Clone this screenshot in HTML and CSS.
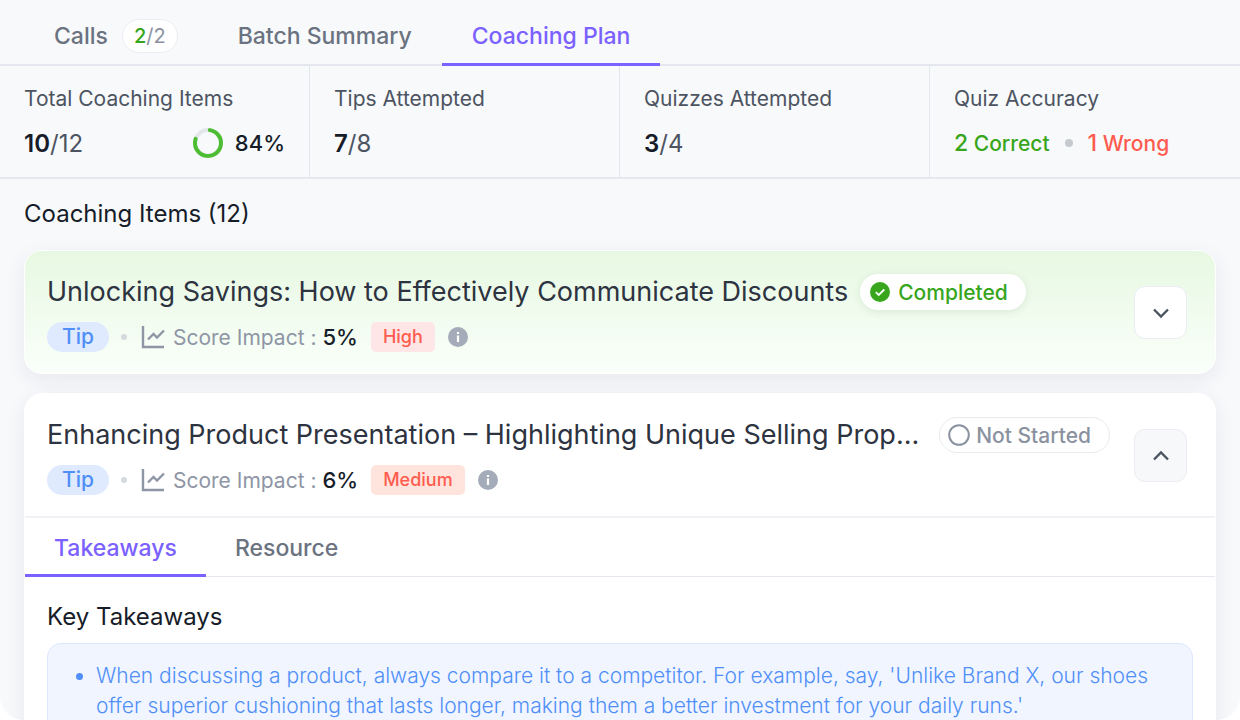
FILE: index.html
```html
<!DOCTYPE html>
<html lang="en">
<head>
    <meta charset="UTF-8">
    <meta name="viewport" content="width=device-width, initial-scale=1.0">
    <title>Coaching Plan</title>
    <link rel="stylesheet" href="styles.css">
</head>
<body>
<div class="panel">
    <nav class="tabs">
        <a href="#calls" class="tab">Calls <span class="count"><b>2</b>/2</span></a>
        <a href="#summary" class="tab">Batch Summary</a>
        <a href="#plan" class="tab active">Coaching Plan</a>
    </nav>

    <section class="stats">
        <div class="stat">
            <div class="stat-label">Total Coaching Items</div>
            <div class="stat-row">
                <div class="stat-value"><b>10</b>/12</div>
                <div class="progress">
                    <svg width="32" height="32" viewBox="0 0 32 32" fill="none" stroke-width="4">
                        <circle cx="16" cy="16" r="13" stroke="#e3e6ea"/>
                        <circle cx="16" cy="16" r="13" stroke="#4dbd33" stroke-linecap="round" pathLength="100" stroke-dasharray="78 22" transform="rotate(-82 16 16)"/>
                    </svg>
                    84%
                </div>
            </div>
        </div>
        <div class="stat">
            <div class="stat-label">Tips Attempted</div>
            <div class="stat-row"><div class="stat-value"><b>7</b>/8</div></div>
        </div>
        <div class="stat">
            <div class="stat-label">Quizzes Attempted</div>
            <div class="stat-row"><div class="stat-value"><b>3</b>/4</div></div>
        </div>
        <div class="stat">
            <div class="stat-label">Quiz Accuracy</div>
            <div class="stat-row accuracy">
                <span class="correct"><span class="num">2</span> Correct</span>
                <span class="dot big"></span>
                <span class="wrong"><span class="num">1</span> Wrong</span>
            </div>
        </div>
    </section>

    <main class="content">
        <h2>Coaching Items (12)</h2>

        <article class="card done">
            <header class="card-head">
                <div class="card-info">
                    <div class="title-row">
                        <h3>Unlocking Savings: How to Effectively Communicate Discounts</h3>
                        <span class="status completed">
                            <svg width="20" height="20" viewBox="0 0 20 20" fill="none">
                                <circle cx="10" cy="10" r="10" fill="#38a61c"/>
                                <path d="M5.8 10.2l2.9 2.7 5.6-5.4" stroke="#fff" stroke-width="1.8"/>
                            </svg>
                            Completed
                        </span>
                    </div>
                    <div class="meta">
                        <span class="type">Tip</span>
                        <span class="dot"></span>
                        <span class="impact">
                            <svg width="24" height="24" viewBox="0 0 24 24" fill="none" stroke="#8e95a5">
                                <path d="M2 1v21h21" stroke-width="2.4"/>
                                <path d="M7 14.5l5.5-5.5 3.5 3.5 7-7" stroke-width="2.4"/>
                            </svg>
                            Score Impact :
                        </span>
                        <span class="percent">5%</span>
                        <span class="level high">High</span>
                        <svg class="info" width="20" height="20" viewBox="0 0 20 20">
                            <circle cx="10" cy="10" r="10" fill="#a4abb9"/>
                            <path d="M8.9 5h2.2v2.1H8.9zM8.9 8.4h2.2V15H8.9z" fill="#fff"/>
                        </svg>
                    </div>
                </div>
                <button type="button" class="toggle" aria-label="Expand">
                    <svg width="20" height="20" viewBox="0 0 20 20" fill="none" stroke="#4d5461" stroke-width="2.4">
                        <path d="M3 6.5l7 7 7-7"/>
                    </svg>
                </button>
            </header>
        </article>

        <article class="card">
            <header class="card-head">
                <div class="card-info">
                    <div class="title-row">
                        <h3>Enhancing Product Presentation – Highlighting Unique Selling Prop...</h3>
                        <span class="status pending">
                            <svg width="22" height="22" viewBox="0 0 22 22" fill="none">
                                <circle cx="11" cy="11" r="9.8" stroke="#8b929f" stroke-width="2"/>
                            </svg>
                            Not Started
                        </span>
                    </div>
                    <div class="meta">
                        <span class="type">Tip</span>
                        <span class="dot"></span>
                        <span class="impact">
                            <svg width="24" height="24" viewBox="0 0 24 24" fill="none" stroke="#8e95a5">
                                <path d="M2 1v21h21" stroke-width="2.4"/>
                                <path d="M7 14.5l5.5-5.5 3.5 3.5 7-7" stroke-width="2.4"/>
                            </svg>
                            Score Impact :
                        </span>
                        <span class="percent">6%</span>
                        <span class="level medium">Medium</span>
                        <svg class="info" width="20" height="20" viewBox="0 0 20 20">
                            <circle cx="10" cy="10" r="10" fill="#a4abb9"/>
                            <path d="M8.9 5h2.2v2.1H8.9zM8.9 8.4h2.2V15H8.9z" fill="#fff"/>
                        </svg>
                    </div>
                </div>
                <button type="button" class="toggle open" aria-label="Collapse">
                    <svg width="20" height="20" viewBox="0 0 20 20" fill="none" stroke="#4d5461" stroke-width="2.4">
                        <path d="M3 13.5l7-7 7 7"/>
                    </svg>
                </button>
            </header>

            <nav class="tabs card-tabs">
                <a href="#takeaways" class="tab active">Takeaways</a>
                <a href="#resource" class="tab">Resource</a>
            </nav>

            <div class="card-body">
                <h4>Key Takeaways</h4>
                <ul class="takeaways">
                    <li>When discussing a product, always compare it to a competitor. For example, say, 'Unlike Brand X, our shoes offer superior cushioning that lasts longer, making them a better investment for your daily runs.'</li>
                </ul>
            </div>
        </article>
    </main>
</div>
</body>
</html>
```

FILE: styles.css
```css
* {
    box-sizing: border-box;
}

body {
    margin: 0;
    background: #fff;
    font-family: Inter, "Liberation Sans", sans-serif;
    color: #161c28;
}

h2, h3, h4 {
    margin: 0;
    font-weight: 400;
}

svg {
    flex: none;
}

.panel {
    height: 100vh;
    overflow-y: auto;
    scrollbar-width: none;
    background: #f7f9fb;
    border-radius: 0 0 24px 24px;
}

/* tabs */
.tabs {
    display: flex;
    padding: 0 24px;
    height: 66px;
    border-bottom: 2px solid #e6e8ef;
}

.tab {
    display: flex;
    align-items: center;
    gap: 14px;
    padding: 8px 30px 0;
    margin-bottom: -2px;
    border-bottom: 3px solid transparent;
    font-size: 23px;
    font-weight: 500;
    color: #6b7280;
    text-decoration: none;
}

.tab.active {
    color: #7b61ff;
    border-bottom-color: #7b61ff;
}

.count {
    padding: 0 11px;
    line-height: 32px;
    font-size: 20px;
    font-weight: 400;
    color: #8b929f;
    background: #fff;
    border: 1px solid #eceef3;
    border-radius: 17px;
}

.count b {
    font-weight: 500;
    color: #38a61c;
}

/* stats */
.stats {
    display: grid;
    grid-template-columns: repeat(4, 1fr);
    border-bottom: 2px solid #e6e8ef;
}

.stat {
    padding: 20px 24px 18px;
    border-right: 1px solid #e3e6ec;
}

.stat:last-child {
    border-right: none;
}

.stat-label {
    font-size: 21px;
    line-height: 26px;
    color: #4d5461;
}

.stat-row {
    display: flex;
    align-items: center;
    justify-content: space-between;
    height: 32px;
    margin-top: 15px;
}

.stat-value {
    font-size: 24px;
    color: #4d5461;
}

.stat-value b {
    font-weight: 600;
    color: #161c28;
}

.progress {
    display: flex;
    align-items: center;
    gap: 11px;
    font-size: 22px;
    font-weight: 500;
}

.accuracy {
    justify-content: flex-start;
    gap: 15px;
    font-size: 21px;
    font-weight: 500;
}

.num {
    font-size: 23px;
}

.correct {
    color: #38a61c;
}

.wrong {
    color: #ff5b4f;
}

.dot {
    width: 6px;
    height: 6px;
    border-radius: 50%;
    background: #d5dbdd;
}

.dot.big {
    width: 8px;
    height: 8px;
    background: #c6cace;
}

/* coaching items */
.content {
    padding: 20px 24px;
}

h2 {
    margin-bottom: 21px;
    font-size: 24px;
    line-height: 30px;
}

.card {
    margin-top: 19px;
    background: #fff;
    border: 1px solid #fff;
    border-radius: 18px;
    box-shadow: 0 6px 20px rgba(40, 40, 80, 0.08);
}

.card.done {
    background: linear-gradient(#e7f8e2, #fafffa);
}

.card-head {
    display: flex;
    align-items: center;
    justify-content: space-between;
    padding: 22px 28px 21px 22px;
}

.title-row {
    display: flex;
    align-items: center;
    gap: 12px;
    height: 38px;
}

h3 {
    font-size: 27px;
    line-height: 38px;
    color: #2d3340;
    white-space: nowrap;
}

.status {
    display: flex;
    align-items: center;
    gap: 8px;
    height: 36px;
    padding: 0 18px 0 10px;
    font-size: 21px;
    font-weight: 500;
    white-space: nowrap;
    background: #fff;
    border-radius: 18px;
}

.status.completed {
    color: #38a61c;
    box-shadow: 0 2px 8px rgba(40, 80, 40, 0.1);
}

.status.pending {
    margin-left: 8px;
    padding-left: 8px;
    gap: 6px;
    color: #8b929f;
    border: 1px solid #e9ebf0;
}

.meta {
    display: flex;
    align-items: center;
    height: 30px;
    margin-top: 11px;
}

.type {
    padding: 0 15px;
    margin-right: 12px;
    font-size: 21px;
    font-weight: 500;
    line-height: 30px;
    color: #4f8ff7;
    background: #dfeaff;
    border-radius: 15px;
}

.impact {
    display: flex;
    align-items: center;
    gap: 8px;
    margin: 0 6px 0 14px;
    font-size: 21px;
    color: #8e95a5;
}

.percent {
    font-size: 22px;
    font-weight: 500;
}

.level {
    padding: 0 12px;
    margin: 0 13px;
    font-size: 18px;
    font-weight: 500;
    line-height: 30px;
    color: #ff5b4f;
    border-radius: 5px;
}

.high {
    background: #ffe6e6;
}

.medium {
    background: #ffe4de;
}

.toggle {
    display: flex;
    align-items: center;
    justify-content: center;
    width: 53px;
    height: 53px;
    padding: 0;
    background: #fff;
    border: 1px solid #ebedf3;
    border-radius: 11px;
    cursor: pointer;
}

.toggle.open {
    background: #f7f8fa;
}

/* opened item */
.card-tabs {
    height: 61px;
    padding: 0;
    border-top: 2px solid #f0f2f5;
    border-bottom: 1px solid #e6e8ef;
}

.card-tabs .tab {
    padding: 4px 29px 0;
    margin-bottom: -1px;
}

.card-body {
    padding: 24px 22px;
}

h4 {
    font-size: 24px;
    line-height: 32px;
}

.takeaways {
    margin: 10px 0 0;
    padding: 17px 16px 17px 48px;
    font-size: 21px;
    font-weight: 300;
    line-height: 30px;
    color: #4f8ff7;
    background: #f0f5ff;
    border: 1px solid #dce8ff;
    border-radius: 14px;
}
```
